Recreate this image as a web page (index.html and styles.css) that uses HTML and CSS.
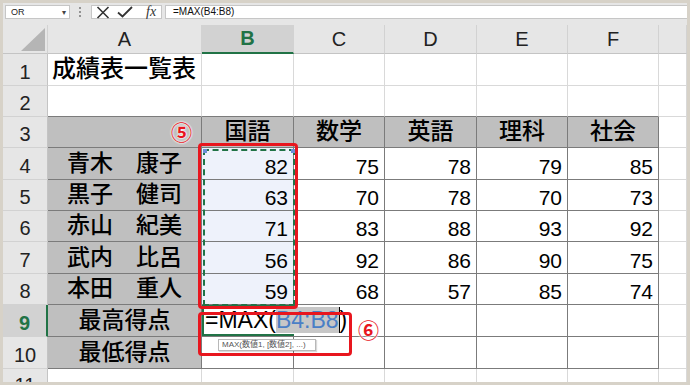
FILE: index.html
```html
<!DOCTYPE html>
<html lang="ja">
<head>
<meta charset="utf-8">
<link rel="stylesheet" href="styles.css">
</head>
<body>
<div class="frame">
  <div class="toolbar">
    <div class="namebox"><span>OR</span><span class="arrow">▾</span></div>
    <svg class="dots" width="4" height="12" viewBox="0 0 4 12"><circle cx="2" cy="2" r="1" fill="#777"/><circle cx="2" cy="6" r="1" fill="#777"/><circle cx="2" cy="10" r="1" fill="#777"/></svg>
    <div class="iconbox">
      <svg width="14" height="13" viewBox="0 0 14 13"><path d="M1.5 1 L12.5 12 M12.5 1 L1.5 12" stroke="#333" stroke-width="1.6" fill="none"/></svg>
      <svg width="16" height="12" viewBox="0 0 16 12"><path d="M1 6.5 L5.5 10.5 L15 1" stroke="#333" stroke-width="1.8" fill="none"/></svg>
      <span class="fx">fx</span>
    </div>
    <div class="fbox">=MAX(B4:B8)</div>
  </div>
  <div class="sheet">
    <div class="c ch corner"><svg width="24" height="23" viewBox="0 0 24 23"><path d="M24 0 L24 23 L0 23 Z" fill="#b5b5b5"/></svg></div>
    <div class="c ch">A</div>
    <div class="c ch sel">B</div>
    <div class="c ch">C</div>
    <div class="c ch">D</div>
    <div class="c ch">E</div>
    <div class="c ch">F</div>
    <div class="c ch"></div>

    <div class="c rh">1</div>
    <div class="c title">成績表一覧表</div>
    <div class="c"></div><div class="c"></div><div class="c"></div><div class="c"></div><div class="c"></div><div class="c"></div>

    <div class="c rh">2</div>
    <div class="c top"></div><div class="c top"></div><div class="c top"></div><div class="c top"></div><div class="c top"></div><div class="c top"></div><div class="c"></div>

    <div class="c rh">3</div>
    <div class="c t g"></div>
    <div class="c t g hd">国語</div>
    <div class="c t g hd">数学</div>
    <div class="c t g hd">英語</div>
    <div class="c t g hd">理科</div>
    <div class="c t g hd">社会</div>
    <div class="c"></div>

    <div class="c rh">4</div>
    <div class="c t g nm">青木　康子</div>
    <div class="c t n b">82</div><div class="c t n">75</div><div class="c t n">78</div><div class="c t n">79</div><div class="c t n">85</div>
    <div class="c"></div>

    <div class="c rh">5</div>
    <div class="c t g nm">黒子　健司</div>
    <div class="c t n b">63</div><div class="c t n">70</div><div class="c t n">78</div><div class="c t n">70</div><div class="c t n">73</div>
    <div class="c"></div>

    <div class="c rh">6</div>
    <div class="c t g nm">赤山　紀美</div>
    <div class="c t n b">71</div><div class="c t n">83</div><div class="c t n">88</div><div class="c t n">93</div><div class="c t n">92</div>
    <div class="c"></div>

    <div class="c rh">7</div>
    <div class="c t g nm">武内　比呂</div>
    <div class="c t n b">56</div><div class="c t n">92</div><div class="c t n">86</div><div class="c t n">90</div><div class="c t n">75</div>
    <div class="c"></div>

    <div class="c rh">8</div>
    <div class="c t g nm">本田　重人</div>
    <div class="c t n b">59</div><div class="c t n">68</div><div class="c t n">57</div><div class="c t n">85</div><div class="c t n">74</div>
    <div class="c"></div>

    <div class="c rh rsel">9</div>
    <div class="c t g nm">最高得点</div>
    <div class="c t active"><span class="ftext">=MAX(<span class="hl">B4:B8</span>)</span></div>
    <div class="c t"></div><div class="c t"></div><div class="c t"></div><div class="c t"></div>
    <div class="c"></div>

    <div class="c rh">10</div>
    <div class="c t g nm">最低得点</div>
    <div class="c t"></div><div class="c t"></div><div class="c t"></div><div class="c t"></div><div class="c t"></div>
    <div class="c"></div>

    <div class="c rh">11</div>
    <div class="c"></div><div class="c"></div><div class="c"></div><div class="c"></div><div class="c"></div><div class="c"></div><div class="c"></div>
  </div>

  <div class="ants"><i class="h1"></i><i class="h2"></i></div>
  <div class="redbox rb1"></div>
  <div class="redbox rb2"></div>
  <div class="mark m5">⑤</div>
  <div class="mark m6">⑥</div>
  <div class="tip">MAX(数値1, [数値2], ...)</div>
</div>
</body>
</html>
```

FILE: styles.css
```css
body {
  margin: 0;
  background: #fff;
}

.frame {
  position: relative;
  width: 690px;
  height: 385px;
  box-sizing: border-box;
  border: 3px solid #d7d2c8;
  background: #e6e6e6;
  overflow: hidden;
  font-family: "Liberation Sans", "Noto Sans CJK JP", sans-serif;
  color: #000;
}

.toolbar {
  height: 22px;
  box-sizing: border-box;
  padding: 2px 0 0 2px;
  display: flex;
  align-items: flex-start;
}

.namebox {
  width: 65px;
  height: 14px;
  box-sizing: border-box;
  background: #fff;
  border: 1px solid #c6c6c6;
  display: flex;
  align-items: center;
  justify-content: space-between;
  padding: 0 3px 0 5px;
  font-size: 9px;
  color: #222;
}

.namebox .arrow {
  font-size: 8px;
  color: #444;
}

.dots {
  margin: 1px 0 0 8px;
}

.iconbox {
  margin-left: 9px;
  width: 71px;
  height: 14px;
  box-sizing: border-box;
  background: #fff;
  border: 1px solid #c6c6c6;
  display: flex;
  align-items: center;
  padding-left: 4px;
  gap: 7px;
}

.fx {
  font-family: "Liberation Serif", serif;
  font-style: italic;
  font-size: 14px;
  line-height: 12px;
  color: #333;
  margin-left: 6px;
}

.fbox {
  margin-left: 3px;
  flex: 1;
  height: 14px;
  box-sizing: border-box;
  background: #fff;
  border: 1px solid #c6c6c6;
  border-right: none;
  font-size: 10px;
  line-height: 12px;
  padding-left: 7px;
  color: #111;
}

.sheet {
  height: 357px;
  display: grid;
  grid-template-columns: 45px 154px 92px 91px 92px 91px 91px 1fr;
  grid-template-rows: 29px 32px 31px 31px 32px 31px 31px 32px 31px 32px 32px 1fr;
  background: #fff;
}

.c {
  box-sizing: border-box;
  min-width: 0;
  border-right: 1px solid #d9d9d9;
  border-bottom: 1px solid #d9d9d9;
  display: flex;
  align-items: flex-end;
  white-space: nowrap;
}

.ch {
  background: #e6e6e6;
  border-right: 1px solid #d2d2d2;
  border-bottom: 1px solid #c4c4c4;
  justify-content: center;
  align-items: center;
  font-size: 20px;
  color: #222;
}

.ch.corner {
  justify-content: flex-end;
  align-items: flex-end;
  padding: 0 2px 2px 0;
}

.ch.sel {
  background: #d2d2d2;
  border-bottom: 2px solid #217346;
  color: #217346;
  font-weight: bold;
}

.rh {
  background: #e6e6e6;
  border-right: 1px solid #c4c4c4;
  border-bottom: 1px solid #d2d2d2;
  justify-content: center;
  align-items: center;
  font-size: 20px;
  color: #222;
  padding-top: 5px;
}

.rh.rsel {
  background: #d2d2d2;
  border-right: 2px solid #217346;
  color: #217346;
  font-weight: bold;
}

.title {
  font-size: 24px;
  font-weight: 500;
  line-height: 1;
  padding: 0 0 4px 4px;
  overflow: visible;
}

.top {
  border-bottom-color: #7b7b7b;
}

.t {
  border-right-color: #7b7b7b;
  border-bottom-color: #7b7b7b;
}

.g {
  background: #bfbfbf;
}

.hd,
.nm {
  justify-content: center;
  font-size: 23px;
  font-weight: 500;
  line-height: 1;
  padding-bottom: 4px;
}

.n {
  justify-content: flex-end;
  font-size: 21px;
  line-height: 1;
  padding: 0 5px 2px 0;
}

.n.b {
  background: #eef2fb;
}

.active {
  border-right: none;
  box-shadow: inset 2px 0 #217346, inset 0 -2px #217346, inset 0 2px #217346;
  overflow: visible;
  align-items: center;
  padding-left: 3px;
}

.ftext {
  font-size: 23px;
  line-height: 1;
  color: #000;
}

.hl {
  background: #c7c7c7;
  color: #4a7fc6;
  border-right: 1px solid #000;
}

.ants {
  position: absolute;
  left: 200px;
  top: 146px;
  width: 92px;
  height: 157px;
  box-sizing: border-box;
  border: 2px dashed #217346;
}

.ants i {
  position: absolute;
  top: -2px;
  width: 4px;
  height: 4px;
  background: #6b8fd6;
}

.ants .h1 { left: -2px; }
.ants .h2 { right: -2px; }

.redbox {
  position: absolute;
  box-sizing: border-box;
  border: 3px solid #e8161e;
  border-radius: 4px;
}

.rb1 {
  left: 195px;
  top: 140px;
  width: 100px;
  height: 166px;
}

.rb2 {
  left: 195px;
  top: 309px;
  width: 154px;
  height: 44px;
}

.mark {
  position: absolute;
  font-family: "Noto Sans CJK JP", sans-serif;
  font-size: 21px;
  line-height: 21px;
  color: #e8161e;
  font-weight: bold;
  text-shadow: 0 0 2px #fff, 0 0 2px #fff, 0 0 2px #fff;
}

.m5 {
  left: 168px;
  top: 118px;
}

.m6 {
  left: 355px;
  top: 316px;
}

.tip {
  position: absolute;
  left: 215px;
  top: 336px;
  width: 98px;
  height: 12px;
  box-sizing: border-box;
  background: #fff;
  border: 1px solid #b8b8b8;
  box-shadow: 1px 1px 1px rgba(0, 0, 0, 0.15);
  font-size: 8px;
  line-height: 10px;
  color: #555;
  padding-left: 3px;
  white-space: nowrap;
}
```
